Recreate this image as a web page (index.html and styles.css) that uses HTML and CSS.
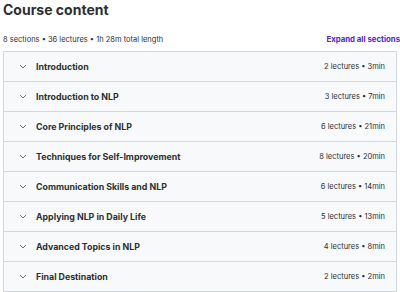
FILE: index.html
```html
<!DOCTYPE html>
<html lang="en">
<head>
    <meta charset="UTF-8">
    <meta name="viewport" content="width=device-width, initial-scale=1.0">
    <title>Course content</title>
    <link rel="stylesheet" href="styles.css">
</head>
<body>

    <h2 class="title">Course content</h2>

    <div class="summary">
        <span>8 sections • 36 lectures • 1h 28m total length</span>
        <button class="expand">Expand all sections</button>
    </div>

    <!-- Lista de secciones -->
    <div class="sections">
        <div class="section">
            <span class="chevron"><svg width="8" height="5" viewBox="0 0 8 5"><path d="M1 1l3 3 3-3" fill="none" stroke="#6a6f73" stroke-width="1"/></svg></span>
            <span class="name">Introduction</span>
            <span class="meta">2 lectures • 3min</span>
        </div>
        <div class="section">
            <span class="chevron"><svg width="8" height="5" viewBox="0 0 8 5"><path d="M1 1l3 3 3-3" fill="none" stroke="#6a6f73" stroke-width="1"/></svg></span>
            <span class="name">Introduction to NLP</span>
            <span class="meta">3 lectures • 7min</span>
        </div>
        <div class="section">
            <span class="chevron"><svg width="8" height="5" viewBox="0 0 8 5"><path d="M1 1l3 3 3-3" fill="none" stroke="#6a6f73" stroke-width="1"/></svg></span>
            <span class="name">Core Principles of NLP</span>
            <span class="meta">6 lectures • 21min</span>
        </div>
        <div class="section">
            <span class="chevron"><svg width="8" height="5" viewBox="0 0 8 5"><path d="M1 1l3 3 3-3" fill="none" stroke="#6a6f73" stroke-width="1"/></svg></span>
            <span class="name">Techniques for Self-Improvement</span>
            <span class="meta">8 lectures • 20min</span>
        </div>
        <div class="section">
            <span class="chevron"><svg width="8" height="5" viewBox="0 0 8 5"><path d="M1 1l3 3 3-3" fill="none" stroke="#6a6f73" stroke-width="1"/></svg></span>
            <span class="name">Communication Skills and NLP</span>
            <span class="meta">6 lectures • 14min</span>
        </div>
        <div class="section">
            <span class="chevron"><svg width="8" height="5" viewBox="0 0 8 5"><path d="M1 1l3 3 3-3" fill="none" stroke="#6a6f73" stroke-width="1"/></svg></span>
            <span class="name">Applying NLP in Daily Life</span>
            <span class="meta">5 lectures • 13min</span>
        </div>
        <div class="section">
            <span class="chevron"><svg width="8" height="5" viewBox="0 0 8 5"><path d="M1 1l3 3 3-3" fill="none" stroke="#6a6f73" stroke-width="1"/></svg></span>
            <span class="name">Advanced Topics in NLP</span>
            <span class="meta">4 lectures • 8min</span>
        </div>
        <div class="section">
            <span class="chevron"><svg width="8" height="5" viewBox="0 0 8 5"><path d="M1 1l3 3 3-3" fill="none" stroke="#6a6f73" stroke-width="1"/></svg></span>
            <span class="name">Final Destination</span>
            <span class="meta">2 lectures • 2min</span>
        </div>
    </div>

</body>
</html>
```

FILE: styles.css
```css
body {
    font-family: Inter, "Noto Sans", sans-serif;
    color: #2d2f31;
    background-color: #fff;
    margin: 0;
    padding: 0 3px;
}

.title {
    font-size: 14px;
    font-weight: 700;
    margin: 0;
    line-height: 20px;
}

.summary {
    display: flex;
    justify-content: space-between;
    align-items: center;
    margin-top: 11px;
    height: 16px;
    font-size: 7.5px;
    color: #2d2f31;
    margin-right: -3px;
}

.expand {
    background: none;
    border: none;
    padding: 0;
    font-family: inherit;
    font-size: 7.8px;
    font-weight: 700;
    color: #5624d0;
    cursor: pointer;
}

.sections {
    margin-top: 4px;
    border: 1px solid #d1d7dc;
}

.section {
    display: flex;
    align-items: center;
    height: 29px;
    background-color: #f7f9fa;
    border-bottom: 1px solid #d1d7dc;
    padding: 0 11px 0 15px;
}

.section:last-child {
    border-bottom: none;
}

.chevron {
    display: flex;
    width: 17px;
}

.name {
    flex: 1;
    font-size: 8.8px;
    font-weight: 700;
}

.meta {
    font-size: 7.5px;
    color: #2d2f31;
}
```
